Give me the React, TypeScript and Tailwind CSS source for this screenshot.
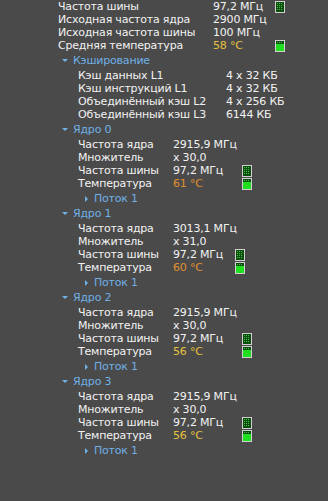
import React from 'react'

type Row = { label: string; value: string; tone?: 'yellow' | 'orange'; icon?: 'bus' | 'temp' }

const font = { fontFamily: '"DejaVu Sans", Verdana, sans-serif' }

function Dots({ w, h, y0 }: { w: number; h: number; y0: number }) {
  const dots = []
  for (let y = y0; y < y0 + h; y += 2) {
    for (let x = 2; x < 2 + w; x += 2) {
      dots.push(<rect key={`${x}-${y}`} x={x} y={y} width="1" height="1" fill="#3fbf3f" />)
    }
  }
  return <>{dots}</>
}

function BusIcon() {
  return (
    <svg width="10" height="12" viewBox="0 0 10 12" className="block">
      <rect x="0.5" y="0.5" width="9" height="11" fill="#0c4d10" stroke="#d0d0d0" />
      <Dots w={6} h={8} y0={2} />
    </svg>
  )
}

function TempIcon() {
  return (
    <svg width="10" height="12" viewBox="0 0 10 12" className="block">
      <rect x="0.5" y="0.5" width="9" height="11" fill="#0c4d10" stroke="#d0d0d0" />
      <Dots w={6} h={2} y0={2} />
      <rect x="1" y="4" width="8" height="7" fill="#1fe01f" />
    </svg>
  )
}

function DataRow({ row, labelW, valueW }: { row: Row; labelW: string; valueW: string }) {
  const color = row.tone === 'yellow' ? 'text-[#e6c13e]' : row.tone === 'orange' ? 'text-[#e0902e]' : 'text-[#f2f2f2]'
  return (
    <div className="flex items-center h-[13px]">
      <div className={`${labelW} shrink-0 text-[#f2f2f2] whitespace-nowrap`}>{row.label}</div>
      <div className={`${valueW} shrink-0 whitespace-nowrap ${color}`}>{row.value}</div>
      {row.icon === 'bus' && <BusIcon />}
      {row.icon === 'temp' && <TempIcon />}
    </div>
  )
}

function Down() {
  return <span className="inline-block w-0 h-0 border-l-[3px] border-r-[3px] border-t-[3px] border-l-transparent border-r-transparent border-t-[#6fb0e6] mr-[5px]" />
}

function Right() {
  return <span className="inline-block w-0 h-0 border-t-[3px] border-b-[3px] border-l-[3px] border-t-transparent border-b-transparent border-l-[#6fb0e6] mr-[6px]" />
}

const top: Row[] = [
  { label: 'Частота шины', value: '97,2 МГц', icon: 'bus' },
  { label: 'Исходная частота ядра', value: '2900 МГц' },
  { label: 'Исходная частота шины', value: '100 МГц' },
  { label: 'Средняя температура', value: '58 °C', tone: 'yellow', icon: 'temp' },
]

const cache: Row[] = [
  { label: 'Кэш данных L1', value: '4 x 32 КБ' },
  { label: 'Кэш инструкций L1', value: '4 x 32 КБ' },
  { label: 'Объединённый кэш L2', value: '4 x 256 КБ' },
  { label: 'Объединённый кэш L3', value: '6144 КБ' },
]

const cores = [
  { clock: '2915,9 МГц', mult: 'x 30,0', temp: '61 °C', tone: 'orange' as const, vw: 'w-[69px]' },
  { clock: '3013,1 МГц', mult: 'x 31,0', temp: '60 °C', tone: 'orange' as const, vw: 'w-[62px]' },
  { clock: '2915,9 МГц', mult: 'x 30,0', temp: '56 °C', tone: 'yellow' as const, vw: 'w-[69px]' },
  { clock: '2915,9 МГц', mult: 'x 30,0', temp: '56 °C', tone: 'yellow' as const, vw: 'w-[69px]' },
]

export default function App() {
  return (
    <div className="w-[328px] h-[501px] bg-[#4a4a4a] overflow-hidden text-[11px] leading-[13px] tracking-[-0.2px]" style={font}>
      <div className="pl-[58px] pb-px">
        {top.map((r) => (
          <DataRow key={r.label} row={r} labelW="w-[155px]" valueW="w-[62px]" />
        ))}
      </div>
      <div className="pl-[62px] h-[15px] flex items-center text-[#6fb0e6]">
        <Down />
        Кэширование
      </div>
      <div className="pl-[78px] py-px">
        {cache.map((r) => (
          <DataRow key={r.label} row={r} labelW="w-[148px]" valueW="w-[70px]" />
        ))}
      </div>
      {cores.map((c, i) => (
        <div key={i}>
          <div className="pl-[62px] h-[15px] flex items-center text-[#6fb0e6]">
            <Down />
            Ядро {i}
          </div>
          <div className="pl-[78px] py-px">
            <DataRow row={{ label: 'Частота ядра', value: c.clock }} labelW="w-[95px]" valueW={c.vw} />
            <DataRow row={{ label: 'Множитель', value: c.mult }} labelW="w-[95px]" valueW={c.vw} />
            <DataRow row={{ label: 'Частота шины', value: '97,2 МГц', icon: 'bus' }} labelW="w-[95px]" valueW={c.vw} />
            <DataRow row={{ label: 'Температура', value: c.temp, tone: c.tone, icon: 'temp' }} labelW="w-[95px]" valueW={c.vw} />
          </div>
          <div className="pl-[85px] h-[15px] flex items-center text-[#6fb0e6]">
            <Right />
            Поток 1
          </div>
        </div>
      ))}
    </div>
  )
}
